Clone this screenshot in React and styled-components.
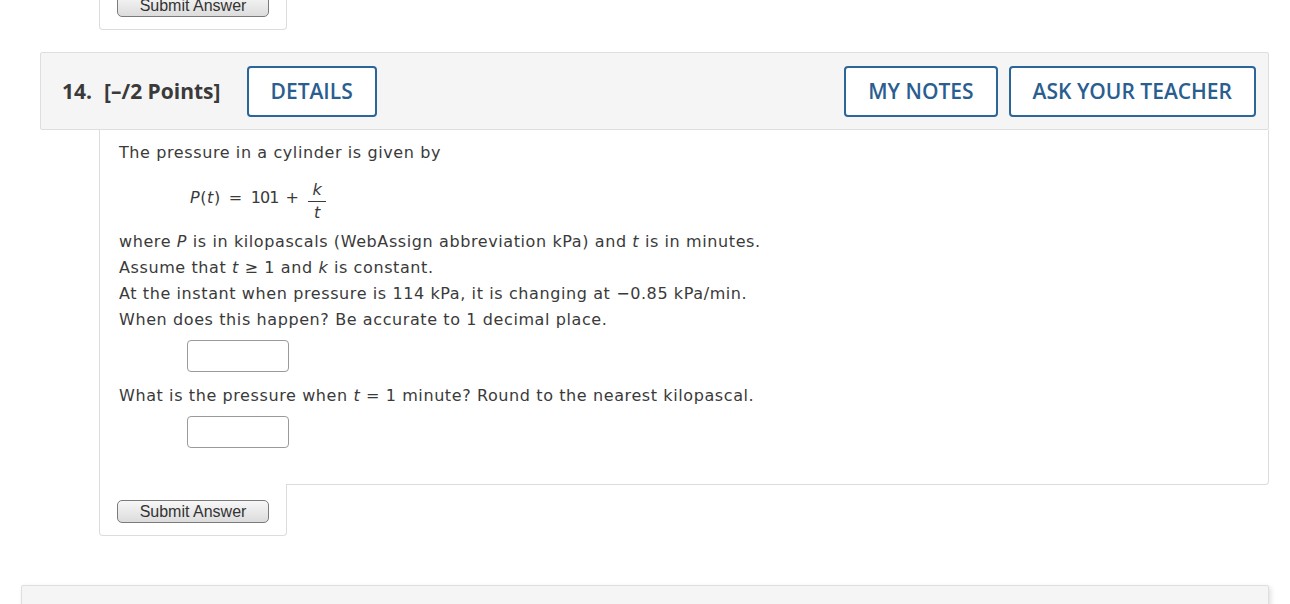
import React from "react";
import styled, { createGlobalStyle } from "styled-components";

const GlobalStyle = createGlobalStyle`
  html, body {
    margin: 0;
    padding: 0;
    background: #ffffff;
  }
  body {
    overflow: hidden;
  }
`;

const Page = styled.div`
  display: flow-root;
  width: 1290px;
  height: 604px;
  overflow: hidden;
`;

const SubmitTab = styled.div`
  position: relative;
  box-sizing: border-box;
  width: 188px;
  margin-left: ${props => props.left}px;
  margin-top: ${props => (props.top ? "-22px" : "-1px")};
  padding: 16px 18px 12px 17px;
  background: #ffffff;
  border: 1px solid #dcdcdc;
  border-top: none;
  border-radius: 0 0 4px 4px;
`;

const SubmitButton = styled.button`
  display: block;
  box-sizing: border-box;
  width: 152px;
  height: 23px;
  padding: 0;
  font-family: "Liberation Sans", Arial, sans-serif;
  font-size: 16px;
  color: #333333;
  background: linear-gradient(#f7f7f7, #dcdcdc);
  border: 1px solid #7b7b7b;
  border-radius: 5px;
`;

const Question = styled.div`
  margin-top: 22px;
  margin-left: 40px;
  width: 1229px;
`;

const Header = styled.div`
  box-sizing: border-box;
  height: 78px;
  display: flex;
  align-items: center;
  padding: 0 12px 0 21px;
  background: #f5f5f5;
  border: 1px solid #dedede;
  border-radius: 2px;
  font-family: "Open Sans", sans-serif;
`;

const Number = styled.span`
  font-size: 21px;
  font-weight: 700;
  color: #3a3a3a;
  margin-right: 12px;
`;

const Points = styled.span`
  font-size: 21px;
  font-weight: 700;
  color: #3a3a3a;
  margin-right: 26px;
`;

const Spacer = styled.div`
  flex: 1;
`;

const HeadButton = styled.button`
  box-sizing: border-box;
  height: 51px;
  padding: 0 22px;
  margin-left: ${props => (props.gap ? props.gap : 0)}px;
  font-family: "Open Sans", sans-serif;
  font-size: 21px;
  font-weight: 600;
  color: #2a5e90;
  background: #ffffff;
  border: 2px solid #2c6597;
  border-radius: 4px;
`;

const Body = styled.div`
  box-sizing: border-box;
  margin-left: 59px;
  padding: 10px 19px 36px 19px;
  background: #ffffff;
  border: 1px solid #dcdcdc;
  border-top: none;
  border-radius: 0 0 4px 0;
  font-family: "DejaVu Sans", Verdana, sans-serif;
  font-size: 16px;
  letter-spacing: 0.6px;
  line-height: 26px;
  color: #3a3a3a;
`;

const Line = styled.div`
  white-space: nowrap;
`;

const Equation = styled.div`
  display: flex;
  align-items: center;
  height: 63px;
  padding-left: 71px;
  white-space: nowrap;
`;

const Op = styled.span`
  margin: 0 ${props => props.right}px 0 ${props => props.left}px;
`;

const Num = styled.span`
  letter-spacing: -1px;
`;

const Fraction = styled.span`
  display: inline-flex;
  flex-direction: column;
  align-items: center;
  margin: 7px 0 0 6px;
  line-height: 22px;
`;

const Numerator = styled.span`
  padding: 0 4px;
  border-bottom: 1px solid #3a3a3a;
`;

const AnswerRow = styled.div`
  padding-left: 68px;
  margin: ${props => props.margin};
`;

const AnswerBox = styled.input`
  display: block;
  box-sizing: border-box;
  width: 102px;
  height: 32px;
  border: 1px solid #9a9a9a;
  border-radius: 4px;
  background: #ffffff;
`;

const NextHeader = styled.div`
  box-sizing: border-box;
  margin-top: 49px;
  margin-left: 21px;
  width: 1248px;
  height: 40px;
  background: #f5f5f5;
  border: 1px solid #dedede;
  border-radius: 2px;
  box-shadow: 2px 2px 5px rgba(0, 0, 0, 0.12);
`;

export default function App() {
  return (
    <Page>
      <GlobalStyle />
      <SubmitTab top left={99}>
        <SubmitButton>Submit Answer</SubmitButton>
      </SubmitTab>

      <Question>
        <Header>
          <Number>14.</Number>
          <Points>[–/2 Points]</Points>
          <HeadButton>DETAILS</HeadButton>
          <Spacer />
          <HeadButton>MY NOTES</HeadButton>
          <HeadButton gap={11}>ASK YOUR TEACHER</HeadButton>
        </Header>

        <Body>
          <Line>The pressure in a cylinder is given by</Line>
          <Equation>
            <span>
              <i>P</i>(<i>t</i>)
            </span>
            <Op left={8} right={8}>=</Op>
            <Num>101</Num>
            <Op left={7} right={3}>+</Op>
            <Fraction>
              <Numerator><i>k</i></Numerator>
              <i>t</i>
            </Fraction>
          </Equation>
          <Line>
            where <i>P</i> is in kilopascals (WebAssign abbreviation kPa) and <i>t</i> is in minutes.
          </Line>
          <Line>
            Assume that <i>t</i> ≥ 1 and <i>k</i> is constant.
          </Line>
          <Line>At the instant when pressure is 114 kPa, it is changing at −0.85 kPa/min.</Line>
          <Line>When does this happen? Be accurate to 1 decimal place.</Line>
          <AnswerRow margin="7px 0 11px 0">
            <AnswerBox />
          </AnswerRow>
          <Line>
            What is the pressure when <i>t</i> = 1 minute? Round to the nearest kilopascal.
          </Line>
          <AnswerRow margin="7px 0 0 0">
            <AnswerBox />
          </AnswerRow>
        </Body>
        <SubmitTab left={59}>
          <SubmitButton>Submit Answer</SubmitButton>
        </SubmitTab>
      </Question>

      <NextHeader />
    </Page>
  );
}
